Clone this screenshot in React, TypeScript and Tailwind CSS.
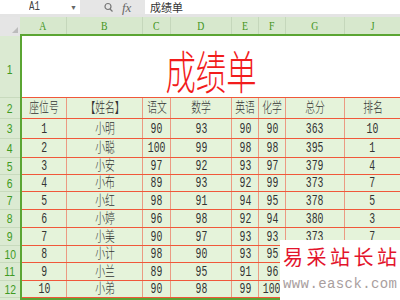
const colLetters = ["A", "B", "C", "D", "E", "F", "G", "J"];

const rows = [
  { n: 2, h: "h-[21px]", cells: ["座位号", "【姓名】", "语文", "数学", "英语", "化学", "总分", "排名"] },
  { n: 3, h: "h-[20px]", cells: ["1", "小明", "90", "93", "90", "90", "363", "10"] },
  { n: 4, h: "h-[19px]", cells: ["2", "小聪", "100", "99", "98", "98", "395", "1"] },
  { n: 5, h: "h-[17px]", cells: ["3", "小安", "97", "92", "93", "97", "379", "4"] },
  { n: 6, h: "h-[17px]", cells: ["4", "小布", "89", "93", "92", "99", "373", "7"] },
  { n: 7, h: "h-[18px]", cells: ["5", "小红", "98", "91", "94", "95", "378", "5"] },
  { n: 8, h: "h-[18px]", cells: ["6", "小婷", "96", "98", "92", "94", "380", "3"] },
  { n: 9, h: "h-[18px]", cells: ["7", "小美", "90", "97", "93", "93", "373", "7"] },
  { n: 10, h: "h-[17px]", cells: ["8", "小计", "98", "90", "93", "95", "376", "6"] },
  { n: 11, h: "h-[18px]", cells: ["9", "小兰", "89", "95", "91", "96", "371", "9"] },
  { n: 12, h: "h-[17px]", cells: ["10", "小弟", "90", "98", "99", "100", "387", "2"] },
];

const cellFont = "font-['Liberation_Mono','Noto_Sans_CJK_SC',monospace]";

export default function App() {
  return (
    <div className="relative w-[400px] h-[300px] overflow-hidden bg-white">
      {/* formula bar */}
      <div className="flex h-[14px]">
        <div className="w-[80px] bg-white flex items-center pl-[29px]">
          <span className={`inline-block scale-x-75 origin-left text-[12px] leading-none text-[#444] ${cellFont}`}>A1</span>
          <span className="ml-auto mr-[3px] text-[7px] leading-none text-[#666]">▼</span>
        </div>
        <div className="w-[65px] bg-[#e6e6e6] flex items-center pl-[24px] gap-[9px]">
          <svg width="9" height="10" viewBox="0 0 9 10" fill="none" stroke="#777" strokeWidth="1.2">
            <circle cx="4" cy="4.5" r="3" />
            <path d="M6 7 L8.5 9.5" />
          </svg>
          <span className="inline-block text-[13px] leading-none italic text-[#666] font-['Liberation_Serif',serif]">fx</span>
        </div>
        <div className="flex-1 bg-white flex items-center pl-[5px]">
          <span className="text-[11px] leading-none text-[#333] font-['Noto_Sans_CJK_SC',sans-serif]">成绩单</span>
        </div>
      </div>
      <div className="h-[3px] bg-[#e4e4e4]" />

      {/* column headers */}
      <div className="flex h-[19px]">
        <div className="w-[20px] bg-[#e5e5e5] flex items-end justify-end pr-[2px] pb-[3px]">
          <div className="w-0 h-0 border-l-[6px] border-l-transparent border-b-[6px] border-b-[#bcbcbc]" />
        </div>
        <div className="flex-1 grid grid-cols-[47px_76px_28px_61px_27px_27px_59px_1fr] bg-[#d7e8cd] border-b-2 border-[#5ba533]">
          {colLetters.map((c, i) => (
            <div key={c} className={`flex items-center justify-center ${i < colLetters.length - 1 ? "border-r border-[#c5d7bb]" : ""}`}>
              <span className="inline-block scale-x-75 text-[13px] leading-none text-[#3f9420] font-['Liberation_Serif',serif]">{c}</span>
            </div>
          ))}
        </div>
      </div>

      {/* body */}
      <div className="flex">
        <div className="w-[20px] flex flex-col bg-[#dbead2]">
          <div className="h-[62px] flex items-center justify-center pt-[6px] border-b border-[#c8dabd]">
            <span className="inline-block scale-x-[0.8] text-[13px] leading-none text-[#3f9a22] font-['Liberation_Sans',sans-serif]">1</span>
          </div>
          {rows.map((r) => (
            <div key={r.n} className={`${r.h} flex items-center justify-center border-b border-[#c8dabd]`}>
              <span className="inline-block scale-x-[0.8] text-[13px] leading-none text-[#3f9a22] font-['Liberation_Sans',sans-serif]">{r.n}</span>
            </div>
          ))}
        </div>

        <div className="flex-1 border-l-2 border-b-2 border-[#5ba533]">
          <div className="h-[62px] bg-white border-b border-[#f0583a] flex items-center justify-center pt-[5px]">
            <span className="inline-block scale-x-[0.66] text-[46px] leading-none font-light text-[#f21c1c] font-['Noto_Sans_CJK_SC',sans-serif]">成绩单</span>
          </div>
          {rows.map((r) => (
            <div key={r.n} className={`${r.h} grid grid-cols-[45px_76px_28px_61px_27px_27px_59px_1fr] bg-[#e5f3da] border-b border-[#f0583a]`}>
              {r.cells.map((c, i) => (
                <div key={i} className={`flex items-center justify-center ${i < r.cells.length - 1 ? "border-r border-[#eb9a82]" : ""}`}>
                  <span className={`inline-block scale-x-[0.7] whitespace-nowrap text-[14px] leading-none font-light text-[#333] ${cellFont}`}>{c}</span>
                </div>
              ))}
            </div>
          ))}
        </div>
      </div>

      {/* watermark */}
      <div className="absolute left-[280px] top-[240px] w-[120px] h-[60px] bg-white flex flex-col pl-[3px] pt-[7px]">
        <span className="text-[20px] leading-none tracking-[3.5px] text-[#e3142c] font-['Noto_Sans_CJK_SC',sans-serif] whitespace-nowrap">易采站长站</span>
        <span className="mt-[10px] text-[14px] leading-none tracking-[0.4px] text-[#a99e9e] font-['Liberation_Mono',monospace] whitespace-nowrap">www.easck.com</span>
      </div>
    </div>
  );
}
